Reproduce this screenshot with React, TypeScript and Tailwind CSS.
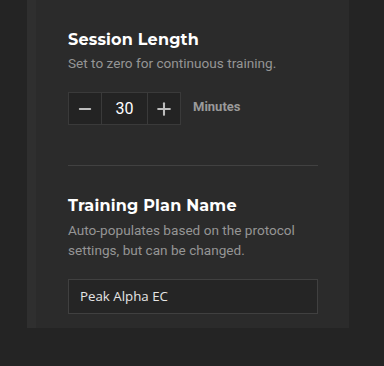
import { Minus, Plus } from "lucide-react";

export default function App() {
  return (
    <div className="w-[384px] h-[366px] bg-[#242424] overflow-hidden">
      <div className="ml-[27px] w-[322px] h-[328px] bg-[#2b2b2b] border-l-[9px] border-[#2f2f2f] pl-[32px] pr-[31px] pt-[30px]">
        <h2 className="text-[16px] leading-[20px] font-bold text-white font-['Montserrat','Inter',sans-serif] tracking-[0.2px]">
          Session Length
        </h2>
        <p className="mt-[3px] text-[13.6px] leading-[20px] text-[#959595] font-['Roboto',sans-serif]">
          Set to zero for continuous training.
        </p>

        <div className="mt-[19px] flex items-center">
          <div className="flex h-[33px] border border-[#3a3a3a] bg-[#232323]">
            <button className="w-[32px] flex items-center justify-center text-[#bdbdbd]">
              <Minus className="w-[18px] h-[18px]" strokeWidth={2.5} />
            </button>
            <div className="w-[47px] border-x border-[#3a3a3a] flex items-center justify-center text-[16px] text-white font-['Roboto',sans-serif]">
              30
            </div>
            <button className="w-[32px] flex items-center justify-center text-[#bdbdbd]">
              <Plus className="w-[20px] h-[20px]" strokeWidth={2.5} />
            </button>
          </div>
          <span className="ml-[12px] -mt-[3px] text-[13px] font-bold text-[#9a9a9a] font-['Roboto',sans-serif]">
            Minutes
          </span>
        </div>

        <div className="mt-[40px] h-px bg-[#414141]" />

        <h2 className="mt-[30px] text-[16px] leading-[20px] font-bold text-white font-['Montserrat','Inter',sans-serif] tracking-[0.2px]">
          Training Plan Name
        </h2>
        <p className="mt-[4px] text-[13.6px] leading-[20px] text-[#959595] font-['Roboto',sans-serif]">
          Auto-populates based on the protocol settings, but can be changed.
        </p>

        <div className="mt-[19px] h-[35px] border border-[#404040] bg-[#252525] flex items-center px-[11px]">
          <span className="text-[13.3px] text-[#e6e6e6] font-['Open_Sans',sans-serif]">Peak Alpha EC</span>
        </div>
      </div>
    </div>
  );
}
